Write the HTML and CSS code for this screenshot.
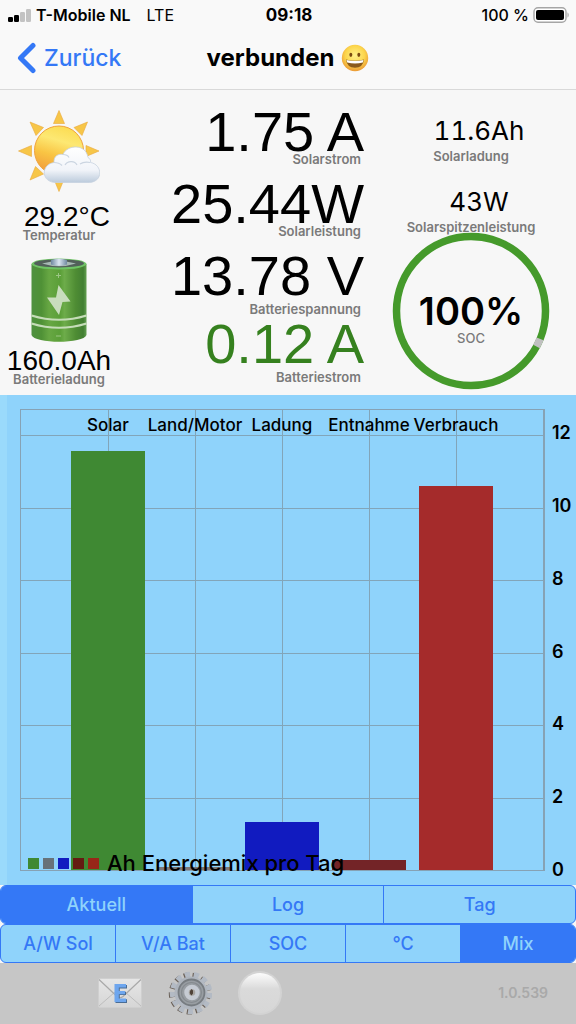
FILE: index.html
```html
<!DOCTYPE html>
<html lang="de">
<head>
    <meta charset="UTF-8">
    <meta name="viewport" content="width=device-width, initial-scale=1.0">
    <title>Solarmonitor</title>
    <link rel="stylesheet" href="styles.css">
</head>
<body>

    <div class="statusbar">
        <div class="carrier">
            <svg width="24" height="14" viewBox="0 0 24 14">
                <rect x="0" y="9" width="5" height="5" rx="1.2"/>
                <rect x="6" y="7" width="5" height="7" rx="1.2"/>
                <rect x="12" y="4" width="5" height="10" rx="1.2" fill="#c3c3c3"/>
                <rect x="18" y="1" width="5" height="13" rx="1.2" fill="#c3c3c3"/>
            </svg>
            <span class="operator">T-Mobile NL</span>
            <span class="network">LTE</span>
        </div>
        <div class="clock">09:18</div>
        <div class="power">
            <span>100 %</span>
            <svg width="37" height="16" viewBox="0 0 37 16">
                <rect x="1" y="0.8" width="32" height="14.4" rx="4" fill="#fff" stroke="#a5a5a5" stroke-width="1.4"/>
                <rect x="3" y="3" width="28" height="10" rx="2"/>
                <path d="M34.5 5.5c1.6.6 1.6 4.4 0 5z" fill="#a5a5a5"/>
            </svg>
        </div>
    </div>

    <header class="navbar">
        <a href="#" class="back">
            <svg width="20" height="32" viewBox="0 0 20 32">
                <path d="M17 3.500L4.500 16L17 28.500" fill="none" stroke="#3478f6" stroke-width="5" stroke-linecap="round" stroke-linejoin="round"/>
            </svg>
            Zurück
        </a>
        <h1>verbunden
            <svg width="28" height="28" viewBox="0 0 28 28">
                <defs>
                    <radialGradient id="face" cx="50%" cy="40%" r="60%">
                        <stop offset="0" stop-color="#fff08a"/>
                        <stop offset="0.6" stop-color="#fcd64c"/>
                        <stop offset="1" stop-color="#eb9a35"/>
                    </radialGradient>
                </defs>
                <circle cx="14" cy="14" r="13.200" fill="url(#face)"/>
                <ellipse cx="9.800" cy="10.800" rx="1.500" ry="2.100" fill="#7a4a12"/>
                <ellipse cx="17.800" cy="10.800" rx="1.500" ry="2.100" fill="#7a4a12"/>
                <path d="M5 15.500Q14 18 23 15.500Q22 23.800 14 23.800Q6 23.800 5 15.500z" fill="#8a5a1c"/>
                <path d="M5.500 16Q14 18.200 22.500 16L21.800 18.600Q14 20.600 6.200 18.600z" fill="#fff"/>
            </svg>
        </h1>
        <span></span>
    </header>

    <main>
        <section class="readings">
            <div class="col left">
                <svg class="weather" width="82" height="82" viewBox="0 0 82 82">
                    <defs>
                        <linearGradient id="sun" x1="0.6" y1="0" x2="0.3" y2="1">
                            <stop offset="0" stop-color="#fbdc52"/>
                            <stop offset="0.3" stop-color="#fde873"/>
                            <stop offset="0.6" stop-color="#f9c544"/>
                            <stop offset="1" stop-color="#f0983a"/>
                        </linearGradient>
                        <linearGradient id="cloud" x1="0" y1="0" x2="0" y2="1">
                            <stop offset="0" stop-color="#fff"/>
                            <stop offset="0.65" stop-color="#f1f4f9"/>
                            <stop offset="1" stop-color="#bccbdc"/>
                        </linearGradient>
                    </defs>
                    <g fill="#f7c648" stroke="#e9a83b" stroke-width="0.6">
                        <path d="M41 0.500L46.500 13.500H35.500z"/>
                        <path d="M12 12L25.500 17.500L18 25.500z"/>
                        <path d="M69.500 12L64 25.500L56 17.500z"/>
                        <path d="M0.500 41L13.500 35.500V46.500z"/>
                        <path d="M81 41L68 46.500V35.500z"/>
                        <path d="M12 70L17.500 56.500L25.500 64z"/>
                        <path d="M41 81.500L35.500 68H46.500z"/>
                    </g>
                    <circle cx="41" cy="40.500" r="24.500" fill="url(#sun)" stroke="#f0a33c"/>
                    <path d="M38 72.500c-15 0-15.500-18-2-20c-.5-7 5-9 9-8c4-10 23-11 25 3c2 1 3 3 2.500 5c12 2 13 19-1 20z" fill="url(#cloud)" stroke="#c6d2e0" stroke-width="0.8"/>
                    <path d="M36 52.500c4 0 6 1 8 3M47 55c3-5 10-4 12 0M62 54c3-2 7-2 10-1.500M45 44.500c3 0 5 1 6 3" fill="none" stroke="#cbd5e1" stroke-width="1.2"/>
                </svg>
                <div class="value mid shifted">29.2°C</div>
                <div class="caption">Temperatur</div>
                <svg class="battery" width="58" height="84" viewBox="0 0 58 84">
                    <defs>
                        <linearGradient id="cell">
                            <stop offset="0" stop-color="#4f9140"/>
                            <stop offset="0.18" stop-color="#4f9136"/>
                            <stop offset="0.32" stop-color="#67a743"/>
                            <stop offset="0.52" stop-color="#5b9f38"/>
                            <stop offset="0.6" stop-color="#6dac4a"/>
                            <stop offset="0.8" stop-color="#4f8d34"/>
                            <stop offset="0.94" stop-color="#427f32"/>
                            <stop offset="1" stop-color="#63a050"/>
                        </linearGradient>
                        <linearGradient id="pole">
                            <stop offset="0" stop-color="#6f88a0"/>
                            <stop offset="0.5" stop-color="#dbe6f1"/>
                            <stop offset="1" stop-color="#6f88a0"/>
                        </linearGradient>
                    </defs>
                    <path d="M1.500 6V77C4 86 54 86 56.500 77V6z" fill="url(#cell)"/>
                    <ellipse cx="29" cy="6" rx="27.500" ry="5.500" fill="#6fc365"/>
                    <ellipse cx="29" cy="5.400" rx="25" ry="4" fill="#52605a"/>
                    <path d="M12 5.500Q29 1 46 5.500Q29 11 12 5.500z" fill="#a7b9b4"/>
                    <path d="M21 2Q29-1 37 2V6.500Q29 9 21 6.500z" fill="url(#pole)"/>
                    <path d="M1.500 57.500Q29 66 56.500 57.500M1.500 65.500Q29 74 56.500 65.500" fill="none" stroke="#c5dcb8" stroke-width="2.200"/>
                    <path d="M28.500 27L40.500 43.500L32.500 44L29 57L17 39.500L26 39.500z" fill="#c9ddbd"/>
                    <path d="M26 17.500h5M28.500 15v5M26 78h5" stroke="#9cc584" stroke-width="1"/>
                </svg>
                <div class="value mid">160.0Ah</div>
                <div class="caption">Batterieladung</div>
            </div>

            <div class="col center">
                <div class="reading">
                    <div class="value big">1.75 A</div>
                    <div class="caption">Solarstrom</div>
                </div>
                <div class="reading">
                    <div class="value big">25.44W</div>
                    <div class="caption">Solarleistung</div>
                </div>
                <div class="reading bat">
                    <div class="value big">13.78 V</div>
                    <div class="caption">Batteriespannung</div>
                </div>
                <div class="reading bat current">
                    <div class="value big">0.12 A</div>
                    <div class="caption">Batteriestrom</div>
                </div>
            </div>

            <div class="col right">
                <div class="value small shifted">11.6Ah</div>
                <div class="caption">Solarladung</div>
                <div class="value small shifted">43W</div>
                <div class="caption">Solarspitzenleistung</div>
                <div class="soc">
                    <svg class="ring" width="158" height="158" viewBox="0 0 158 158">
                        <circle cx="79" cy="79" r="74.500" fill="none" stroke="#459a2b" stroke-width="7.500"/>
                        <circle cx="79" cy="79" r="74.500" fill="none" stroke="#c0c0c0" stroke-width="7.500" stroke-dasharray="8.500 460" transform="rotate(22 79 79)"/>
                    </svg>
                    <div class="soc-text">
                        <strong>100%</strong>
                        <span>SOC</span>
                    </div>
                </div>
            </div>
        </section>

        <section class="chart">
            <div class="plot">
                <div class="rows"><i></i><i></i><i></i><i></i><i></i><i></i><i></i></div>
                <div class="cols"><i></i><i></i><i></i><i></i><i></i><i></i></div>
                <div class="bars">
                    <div class="bar green" style="height: 91%"></div>
                    <div class="bar grey" style="height: 0.7%"></div>
                    <div class="bar blue" style="height: 10.5%"></div>
                    <div class="bar maroon" style="height: 2.1%"></div>
                    <div class="bar red" style="height: 83.4%"></div>
                </div>
                <div class="names">
                    <span>Solar</span>
                    <span>Land/Motor</span>
                    <span>Ladung</span>
                    <span>Entnahme</span>
                    <span>Verbrauch</span>
                </div>
                <div class="legend">
                    <i class="green"></i>
                    <i class="slate"></i>
                    <i class="blue"></i>
                    <i class="maroon"></i>
                    <i class="brick"></i>
                    <span>Ah Energiemix pro Tag</span>
                </div>
            </div>
            <div class="axis">
                <span></span>
                <span>12</span>
                <span>10</span>
                <span>8</span>
                <span>6</span>
                <span>4</span>
                <span>2</span>
                <span>0</span>
            </div>
        </section>

        <div class="segments">
            <button type="button" class="active">Aktuell</button>
            <button type="button">Log</button>
            <button type="button">Tag</button>
        </div>
        <div class="segments">
            <button type="button">A/W Sol</button>
            <button type="button">V/A Bat</button>
            <button type="button">SOC</button>
            <button type="button">°C</button>
            <button type="button" class="active">Mix</button>
        </div>
    </main>

    <footer class="toolbar">
        <button type="button" aria-label="E-Mail">
            <svg width="44" height="30" viewBox="0 0 44 30">
                <defs>
                    <linearGradient id="paper" x1="0" y1="0" x2="0" y2="1">
                        <stop offset="0" stop-color="#e6e6e6"/>
                        <stop offset="1" stop-color="#d6d6d6"/>
                    </linearGradient>
                </defs>
                <rect x="0.500" y="0.500" width="43" height="29" rx="1.500" fill="url(#paper)" stroke="#cfcfcf"/>
                <path d="M1 28L17 14M43 28L27 14" stroke="#bdbdbd" fill="none"/>
                <path d="M1 1.500L19 18.500Q22 21 25 18.500L43 1.500" stroke="#a9a9a9" stroke-width="1.200" fill="none"/>
                <path d="M17.500 7H29V10.500H21.800V13.800H28V17H21.800V21.200H29V25H17.500z" fill="#4a6d95"/>
                <path d="M16.500 6H28V9.500H20.800V13H27V16.200H20.800V20.500H28V24H16.500z" fill="#6ea6ee"/>
            </svg>
        </button>
        <button type="button" aria-label="Einstellungen">
            <svg width="44" height="44" viewBox="0 0 44 44">
                <defs>
                    <linearGradient id="steel" x1="0" y1="0" x2="1" y2="1">
                        <stop offset="0" stop-color="#a9afb7"/>
                        <stop offset="0.5" stop-color="#b4bac3"/>
                        <stop offset="1" stop-color="#aab0b8"/>
                    </linearGradient>
                </defs>
                <circle cx="21.800" cy="22.500" r="18" fill="none" stroke="#6b6158" stroke-width="6" stroke-dasharray="5 3.700"/>
                <circle cx="23" cy="22" r="18" fill="none" stroke="#b3bac4" stroke-width="6.500" stroke-dasharray="5 3.700"/>
                <circle cx="23" cy="22" r="16.500" fill="url(#steel)"/>
                <circle cx="23.500" cy="21.500" r="13" fill="#989da2" stroke="#777c81" stroke-width="1.800"/>
                <circle cx="23.500" cy="21.500" r="10" fill="none" stroke="#858a8f" stroke-width="1.200"/>
                <circle cx="24" cy="21.500" r="5.500" fill="#a8a5a2" stroke="#c6cbd3" stroke-width="4.500"/>
                <path d="M23.500 18q-3.500 3.500 0 6.500l1.500-2v-3z" fill="#4f4238"/>
            </svg>
        </button>
        <button type="button" aria-label="Status">
            <svg width="44" height="44" viewBox="0 0 44 44">
                <defs>
                    <linearGradient id="ball" x1="0" y1="0" x2="0" y2="1">
                        <stop offset="0" stop-color="#fcfcfc"/>
                        <stop offset="0.4" stop-color="#dadada"/>
                        <stop offset="1" stop-color="#d7d7d7"/>
                    </linearGradient>
                </defs>
                <circle cx="22" cy="22" r="22" fill="#d3d3d3"/>
                <circle cx="22" cy="22" r="20" fill="url(#ball)"/>
            </svg>
        </button>
        <span class="version">1.0.539</span>
    </footer>

</body>
</html>
```
FILE: styles.css
```css
* {
    box-sizing: border-box;
}
body {
    margin: 0;
    min-height: 100vh;
    display: flex;
    flex-direction: column;
    font-family: Inter, "Liberation Sans", sans-serif;
    background-color: #f7f7f7;
    color: #000;
}
svg {
    display: block;
    flex: none;
}

/* status bar */
.statusbar {
    display: grid;
    grid-template-columns: 1fr auto 1fr;
    align-items: center;
    height: 30px;
    padding: 0 6px 0 8px;
    background-color: #f9f9f9;
    font-size: 16px;
    font-weight: 500;
}
.carrier, .power {
    display: flex;
    align-items: center;
    gap: 4px;
}
.operator {
    font-weight: 600;
}
.network {
    margin-left: 12px;
    font-weight: 400;
}
.clock {
    font-size: 17px;
    font-weight: 700;
}
.power {
    justify-content: flex-end;
}

/* navigation */
.navbar {
    display: grid;
    grid-template-columns: 1fr auto 1fr;
    align-items: center;
    height: 60px;
    padding: 0 16px 4px;
    background-color: #f9f9f9;
    border-bottom: 1px solid #d9d9d9;
}
.back {
    display: flex;
    align-items: center;
    gap: 8px;
    color: #3478f6;
    font-size: 23px;
    font-weight: 500;
    text-decoration: none;
}
h1 {
    display: flex;
    align-items: center;
    gap: 7px;
    margin: 0;
    font-size: 24px;
    font-weight: 700;
}

main {
    flex: 1;
    display: flex;
    flex-direction: column;
}

/* readings */
.readings {
    display: grid;
    grid-template-columns: 118px 1fr 210px;
    height: 305px;
}
.col {
    display: flex;
    flex-direction: column;
    align-items: center;
}
.value {
    font-family: "Liberation Sans", Arial, sans-serif;
    white-space: nowrap;
}
.mid {
    font-size: 28px;
    line-height: 22px;
}
.small {
    font-family: Inter, sans-serif;
    font-size: 26px;
    font-variant-numeric: tabular-nums;
    line-height: 22px;
}
.big {
    font-size: 56px;
    line-height: 40px;
}
.shifted {
    padding-left: 16px;
}
.caption {
    color: #7a7a7a;
    font-size: 13px;
    font-weight: 600;
    line-height: 14px;
}
.weather {
    margin: 20px 0 14px;
}
.battery {
    margin: 16px 0 8px;
}
.center {
    align-items: flex-end;
    padding: 4px 2px 0 0;
}
.reading {
    margin-top: 18px;
    text-align: right;
}
.reading .caption {
    padding-right: 3px;
}
.bat .caption {
    margin-top: 6px;
}
.current {
    margin-top: 8px;
}
.current .value {
    color: #36811f;
}
.right {
    padding-top: 2px;
}
.right .value {
    margin-top: 28px;
}
.right .caption {
    margin-top: 7px;
}
.soc {
    display: grid;
    place-items: center;
    margin-top: -2px;
}
.soc > * {
    grid-area: 1 / 1;
}
.soc-text {
    display: flex;
    flex-direction: column;
    align-items: center;
    padding-top: 14px;
}
.soc strong {
    font-size: 38px;
    font-weight: 600;
    line-height: 40px;
}
.soc span {
    color: #7a7a7a;
    font-size: 13px;
    font-weight: 500;
    line-height: 14px;
}

/* chart */
.chart {
    flex: 1;
    display: grid;
    grid-template-columns: 1fr 31px;
    min-height: 300px;
    padding: 14px 0 14px 13px;
    background-color: #8fd3fb;
    border-left: 7px solid #9adafb;
}
.plot {
    display: grid;
    border: 1px solid #86a2b4;
    border-width: 1px 2px 1px 1px;
}
.plot > * {
    grid-area: 1 / 1;
}
.rows, .axis {
    display: grid;
    grid-template-rows: 7fr repeat(6, 20fr);
}
.rows i + i {
    border-top: 1px solid #82a5b9;
}
.cols {
    display: grid;
    grid-template-columns: repeat(6, 1fr);
}
.cols i + i {
    border-left: 1px solid #82a5b9;
}
.bars, .names {
    display: grid;
    grid-template-columns: repeat(5, 20%);
    padding: 0 8.33%;
}
.bars {
    align-items: end;
    justify-items: center;
}
.bar {
    width: 85%;
}
.names {
    align-content: start;
    justify-items: center;
    padding-top: 5px;
    font-size: 17px;
    font-weight: 500;
    line-height: 20px;
    white-space: nowrap;
}
.legend {
    align-self: end;
    display: flex;
    align-items: center;
    gap: 4px;
    height: 14px;
    padding-left: 7px;
    font-size: 22px;
    font-weight: 500;
    white-space: nowrap;
}
.legend i {
    width: 11px;
    height: 11px;
}
.legend span {
    margin-left: 4px;
}
.green {
    background-color: #3f8933;
}
.grey {
    background-color: #7e7777;
}
.slate {
    background-color: #67727a;
}
.blue {
    background-color: #111bc0;
}
.maroon {
    background-color: #732427;
}
.legend .maroon {
    background-color: #651b12;
}
.red {
    background-color: #a52b2b;
}
.brick {
    background-color: #982718;
}
.axis {
    grid-template-rows: 7fr repeat(6, 20fr) 0;
    padding-left: 7px;
    font-size: 18px;
    font-weight: 600;
    line-height: 20px;
}
.axis span {
    margin-top: -11px;
}

/* segmented controls */
.segments {
    display: flex;
    height: 39px;
    border: 1px solid #3478f6;
    border-radius: 6px;
    overflow: hidden;
    background-color: #8fd3fb;
}
.segments button {
    flex: 1 1 0;
    padding: 0;
    border: 0;
    background: none;
    color: #3478f6;
    font: 500 18px Inter, sans-serif;
}
.segments button + button {
    border-left: 1px solid #3478f6;
}
.segments .active {
    background-color: #3478f6;
    color: #8fd3fb;
}

/* bottom toolbar */
.toolbar {
    display: flex;
    align-items: center;
    gap: 26px;
    height: 61px;
    padding: 0 28px 2px 98px;
    background-color: #c6c6c6;
}
.toolbar button {
    padding: 0;
    border: 0;
    background: none;
}
.version {
    margin-left: auto;
    color: #a9a9a9;
    font-size: 14px;
    font-weight: 600;
}
```
